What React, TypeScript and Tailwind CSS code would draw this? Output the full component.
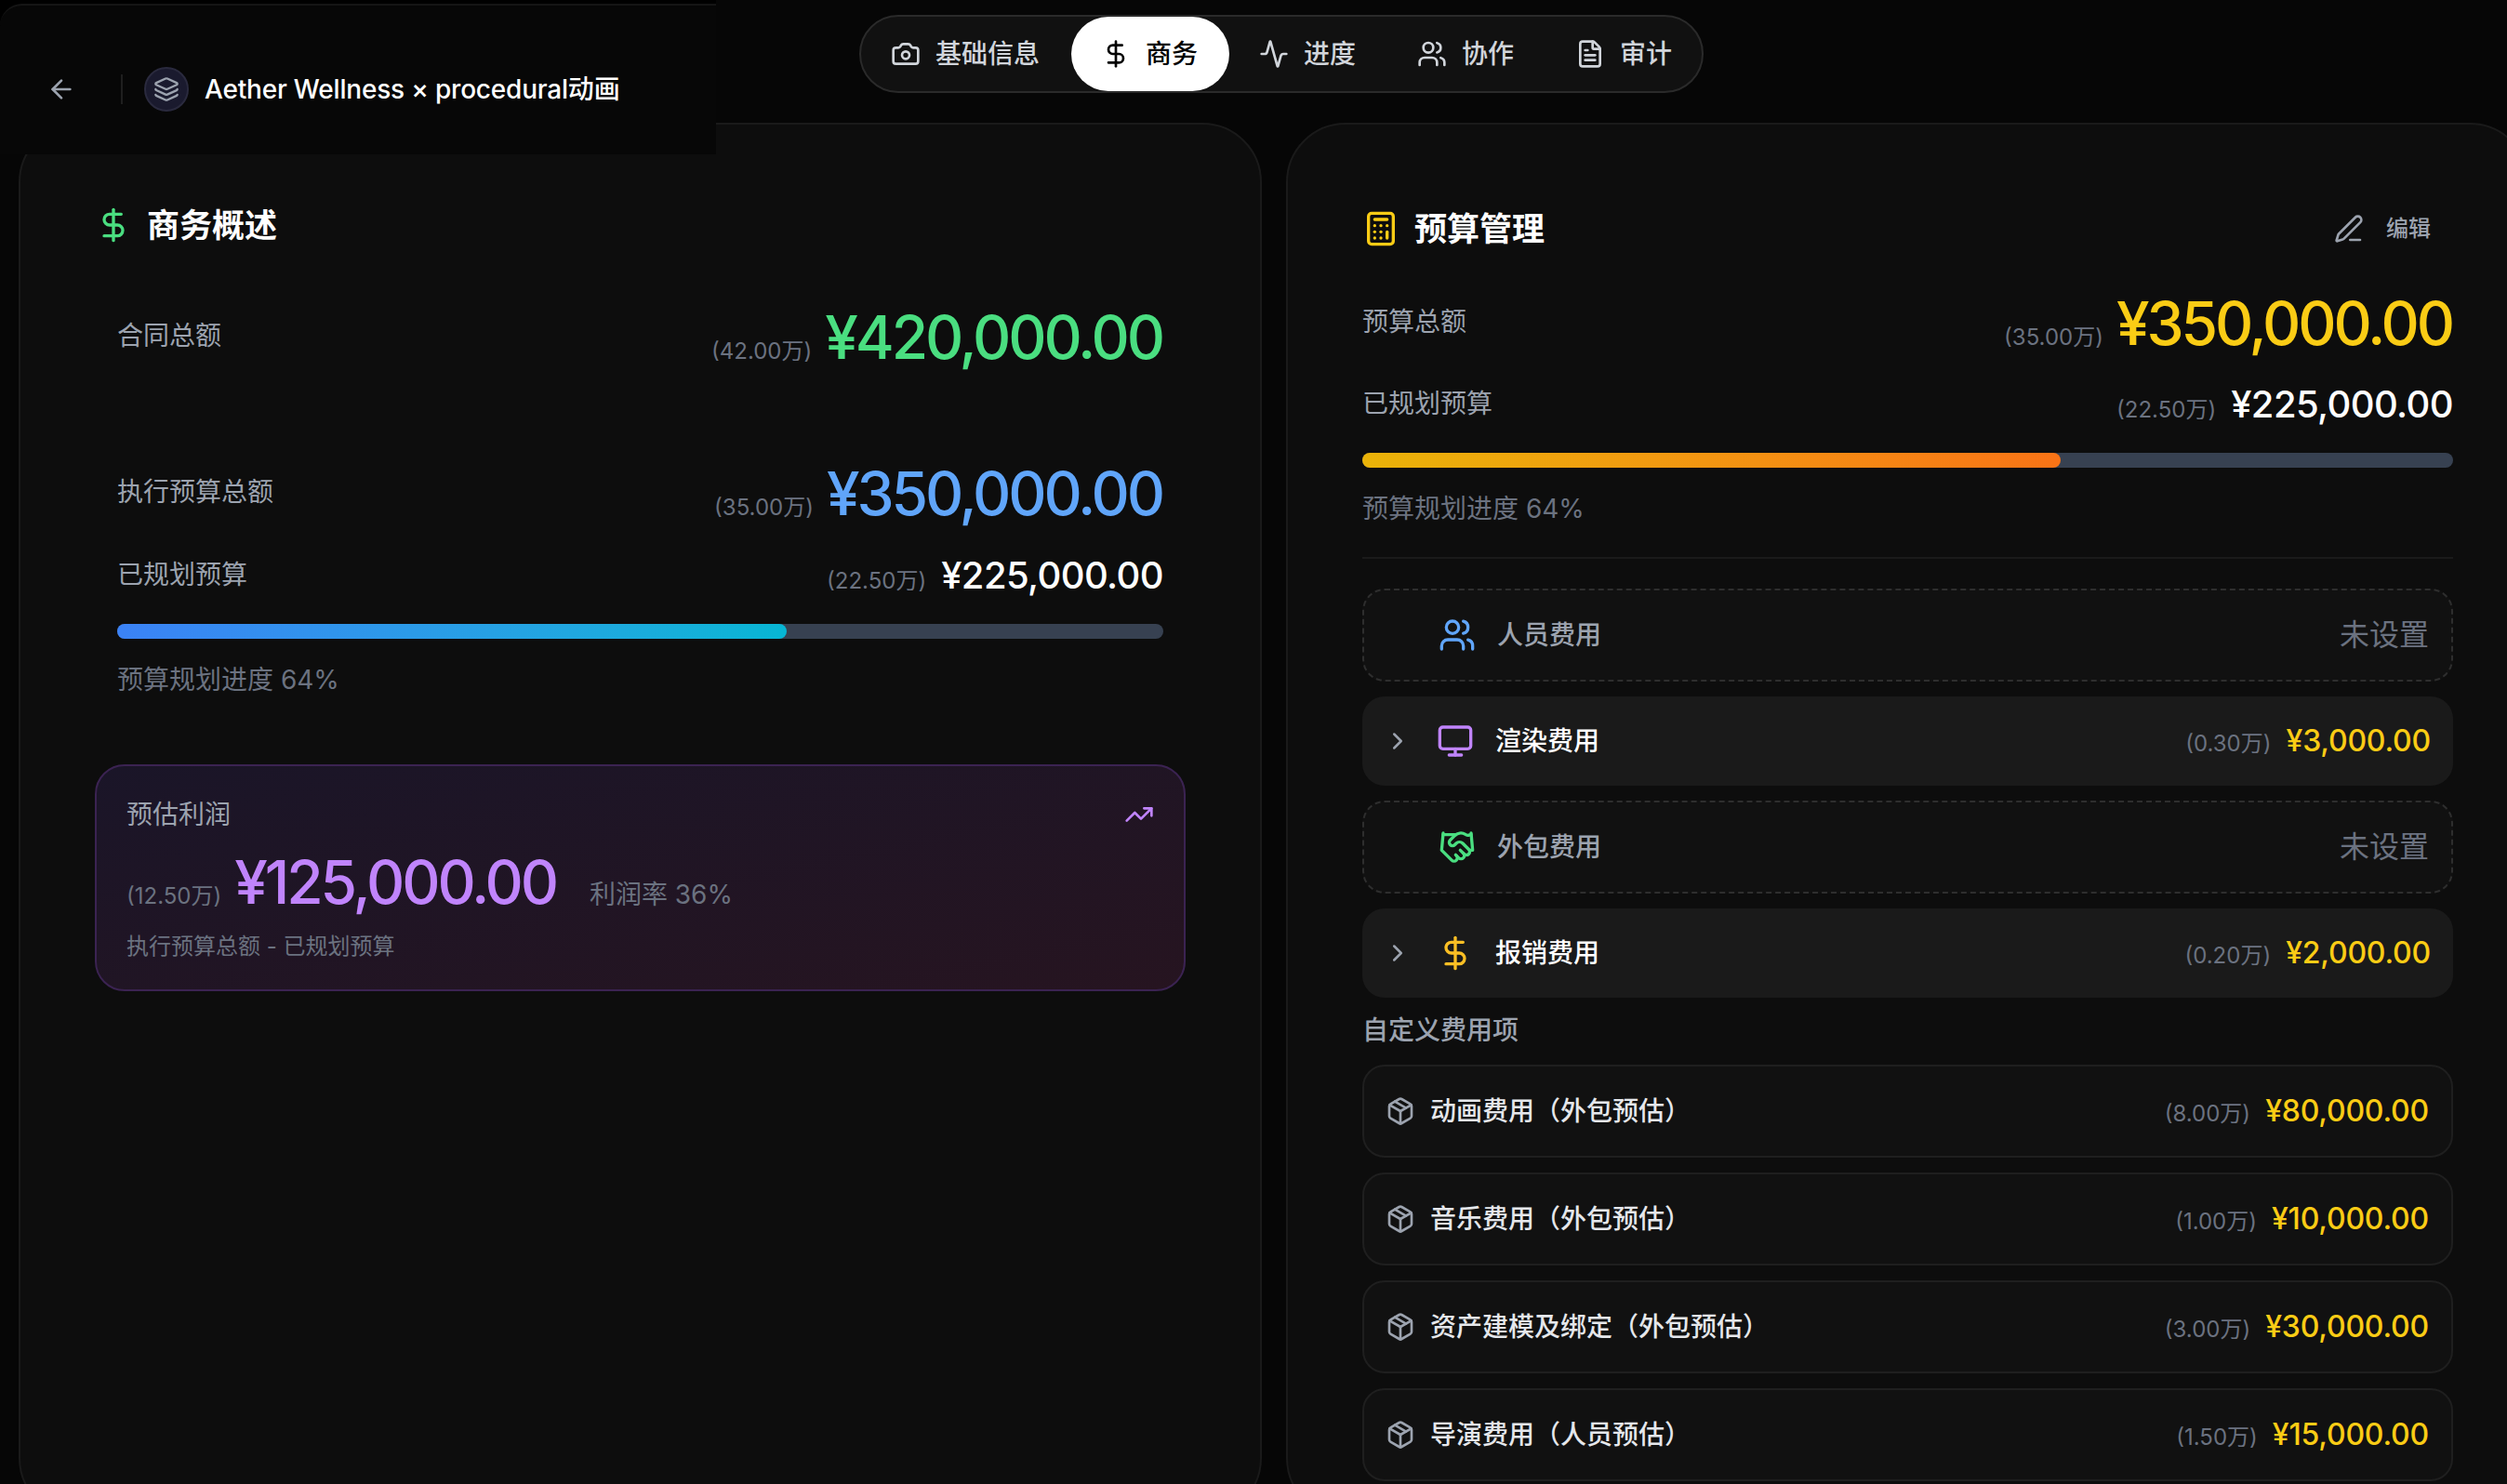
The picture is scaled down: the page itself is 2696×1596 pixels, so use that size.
import React from 'react';
import {
  Activity,
  ArrowLeft,
  Calculator,
  Camera,
  ChevronRight,
  DollarSign,
  FileText,
  Handshake,
  Layers,
  Monitor,
  Package,
  PenLine,
  TrendingUp,
  Users,
} from 'lucide-react';

const tabs = [
  { label: '基础信息', icon: Camera, w: 'w-[226px]' },
  { label: '商务', icon: DollarSign, w: 'w-[170px]', active: true },
  { label: '进度', icon: Activity, w: 'w-[170px]' },
  { label: '协作', icon: Users, w: 'w-[170px]' },
  { label: '审计', icon: FileText, w: 'w-[168px]' },
];

const customItems = [
  { name: '动画费用（外包预估）', wan: '(8.00万)', value: '¥80,000.00' },
  { name: '音乐费用（外包预估）', wan: '(1.00万)', value: '¥10,000.00' },
  { name: '资产建模及绑定（外包预估）', wan: '(3.00万)', value: '¥30,000.00' },
  { name: '导演费用（人员预估）', wan: '(1.50万)', value: '¥15,000.00' },
];

const big = 'text-[64px] font-medium leading-[64px] tracking-[-3.1px] -ml-[2px] mr-[1px]';
const mid = 'text-[40px] font-medium leading-[40px] tracking-[-0.6px] text-white';
const small = 'text-[32px] font-medium leading-[40px] tracking-[-0.2px] text-[#facc15]';

const Amount = ({ wan, value, className }: { wan: string; value: string; className: string }) => (
  <div className="flex items-baseline gap-[16px]">
    <span className="text-[24px] text-[#6b7280]">{wan}</span>
    <span className={className}>{value}</span>
  </div>
);

const StatRow = ({ label, wan, value, className }: { label: string; wan: string; value: string; className: string }) => (
  <div className="flex items-center justify-between">
    <span className="pb-[5px] text-[28px] leading-[40px] text-[#9ca3af]">{label}</span>
    <Amount wan={wan} value={value} className={className} />
  </div>
);

const EmptyRow = ({ name, icon: Icon, color }: { name: string; icon: typeof Users; color: string }) => (
  <div className="flex h-[100px] items-center justify-between rounded-[24px] border-2 border-dashed border-[#2e2e2e] bg-[#111111] pl-[80px] pr-[24px]">
    <div className="flex items-center gap-[23px]">
      <Icon size={40} className={color} />
      <span className="text-[28px] font-medium text-[#9ca3af]">{name}</span>
    </div>
    <span className="text-[32px] text-[#6b7280]">未设置</span>
  </div>
);

const FilledRow = ({ name, icon: Icon, color, wan, value }: { name: string; icon: typeof Users; color: string; wan: string; value: string }) => (
  <div className="flex h-[96px] items-center justify-between rounded-[24px] bg-[#1a1a1a] pl-[23px] pr-[24px]">
    <div className="flex items-center">
      <ChevronRight size={30} className="mr-[27px] text-[#9ca3af]" />
      <Icon size={40} className={`mr-[23px] ${color}`} />
      <span className="text-[28px] font-medium text-white">{name}</span>
    </div>
    <Amount wan={wan} value={value} className={small} />
  </div>
);

export default function App() {
  return (
    <div className="relative h-[1596px] w-[2696px] overflow-hidden bg-[#060606] font-['Inter','Noto_Sans_CJK_SC',sans-serif] text-white">
      {/* project title overlays the card */}
      <div className="absolute left-0 top-0 z-10 h-[166px] w-[770px] bg-black pt-[4px]">
        <div className="h-[162px] rounded-tl-[24px] border-t-2 border-[#151515] bg-[#070707] pl-[50px] pt-[66px]">
          <div className="flex h-[48px] items-center">
            <ArrowLeft size={32} className="text-[#9ca3af]" />
            <div className="ml-[48px] h-[32px] w-[2px] bg-[#1f1f1f]" />
            <div className="ml-[23px] flex h-[48px] w-[48px] items-center justify-center rounded-full border-2 border-[#2a2a3e] bg-[#1a1a2e]">
              <Layers size={28} className="text-[#9ca3af]" />
            </div>
            <span className="ml-[17px] text-[28px] font-medium tracking-[-0.2px] text-white">Aether Wellness × procedural动画</span>
          </div>
        </div>
      </div>

      <div className="flex h-[132px] items-start pl-[924px] pt-[16px]">
        <div className="flex h-[84px] rounded-full border-2 border-[#2a2a2a] bg-[#111111]">
          {tabs.map((tab) => (
            <div
              key={tab.label}
              className={`flex h-[80px] items-center gap-[16px] rounded-full pl-[32px] text-[28px] font-medium ${tab.w} ${tab.active ? 'bg-white text-black' : 'text-[#d1d5db]'}`}
            >
              <tab.icon size={32} />
              <span>{tab.label}</span>
            </div>
          ))}
        </div>
      </div>

      <div className="ml-[20px] grid w-[2700px] grid-cols-2 gap-[26px]">
        {/* business overview */}
        <div className="h-[1500px] rounded-[64px] border-2 border-[#1a1a1a] bg-[#0d0d0d] px-[80px] pt-[84px]">
          <div className="flex h-[48px] items-center gap-[16px]">
            <DollarSign size={40} className="text-[#4ade80]" />
            <h2 className="text-[35px] font-bold">商务概述</h2>
          </div>
          <div className="mt-[65px] px-[24px]">
            <StatRow label="合同总额" wan="(42.00万)" value="¥420,000.00" className={`${big} text-[#4ade80]`} />
            <div className="mt-[103px]">
              <StatRow label="执行预算总额" wan="(35.00万)" value="¥350,000.00" className={`${big} text-[#60a5fa]`} />
            </div>
            <div className="mt-[34px]">
              <StatRow label="已规划预算" wan="(22.50万)" value="¥225,000.00" className={mid} />
            </div>
            <div className="mt-[28px] h-[16px] rounded-full bg-[#374151]">
              <div className="h-full rounded-full bg-gradient-to-r from-[#3b82f6] to-[#06b6d4]" style={{ width: '64%' }} />
            </div>
            <div className="mt-[24px] text-[28px] leading-[40px] text-[#6b7280]">预算规划进度 64%</div>
          </div>

          <div className="mt-[71px] h-[244px] rounded-[32px] border-2 border-[#3b2352] bg-gradient-to-br from-[#1a1528] to-[#261420] px-[32px] pt-[32px]">
            <div className="flex h-[40px] items-center justify-between">
              <span className="text-[28px] text-[#9ca3af]">预估利润</span>
              <TrendingUp size={32} className="text-[#c084fc]" />
            </div>
            <div className="mt-[21px] flex items-baseline">
              <Amount wan="(12.50万)" value="¥125,000.00" className={`${big} text-[#c084fc]`} />
              <span className="ml-[35px] text-[28px] text-[#6b7280]">利润率 36%</span>
            </div>
            <div className="mt-[19px] text-[24px] leading-[32px] text-[#6b7280]">执行预算总额 - 已规划预算</div>
          </div>
        </div>

        {/* budget management */}
        <div className="h-[1500px] rounded-[64px] border-2 border-[#1a1a1a] bg-[#0d0d0d] px-[80px] pt-[84px]">
          <div className="flex h-[56px] items-center justify-between">
            <div className="flex items-center gap-[16px]">
              <Calculator size={40} className="text-[#facc15]" />
              <h2 className="text-[35px] font-bold">预算管理</h2>
            </div>
            <div className="flex items-center gap-[24px] pr-[24px] text-[#9ca3af]">
              <PenLine size={32} />
              <span className="text-[24px] font-medium">编辑</span>
            </div>
          </div>
          <div className="mt-[42px]">
            <StatRow label="预算总额" wan="(35.00万)" value="¥350,000.00" className={`${big} text-[#facc15]`} />
          </div>
          <div className="mt-[33px]">
            <StatRow label="已规划预算" wan="(22.50万)" value="¥225,000.00" className={mid} />
          </div>
          <div className="mt-[28px] h-[16px] rounded-full bg-[#374151]">
            <div className="h-full rounded-full bg-gradient-to-r from-[#eab308] to-[#f97316]" style={{ width: '64%' }} />
          </div>
          <div className="mt-[24px] text-[28px] leading-[40px] text-[#6b7280]">预算规划进度 64%</div>
          <div className="mt-[32px] h-[2px] bg-[#1a1a1a]" />

          <div className="mt-[32px] flex flex-col gap-[16px]">
            <EmptyRow name="人员费用" icon={Users} color="text-[#60a5fa]" />
            <FilledRow name="渲染费用" icon={Monitor} color="text-[#c084fc]" wan="(0.30万)" value="¥3,000.00" />
            <EmptyRow name="外包费用" icon={Handshake} color="text-[#4ade80]" />
            <FilledRow name="报销费用" icon={DollarSign} color="text-[#fbbf24]" wan="(0.20万)" value="¥2,000.00" />
          </div>

          <div className="mt-[15px] text-[28px] font-medium leading-[40px] text-[#9ca3af]">自定义费用项</div>
          <div className="mt-[17px] flex flex-col gap-[16px]">
            {customItems.map((item) => (
              <div key={item.name} className="flex h-[100px] items-center justify-between rounded-[24px] border-2 border-[#1f1f1f] bg-[#111111] pl-[23px] pr-[24px]">
                <div className="flex items-center gap-[16px]">
                  <Package size={32} className="text-[#9ca3af]" />
                  <span className="text-[28px] font-medium text-[#e5e7eb]">{item.name}</span>
                </div>
                <Amount wan={item.wan} value={item.value} className={small} />
              </div>
            ))}
          </div>
        </div>
      </div>
    </div>
  );
}
